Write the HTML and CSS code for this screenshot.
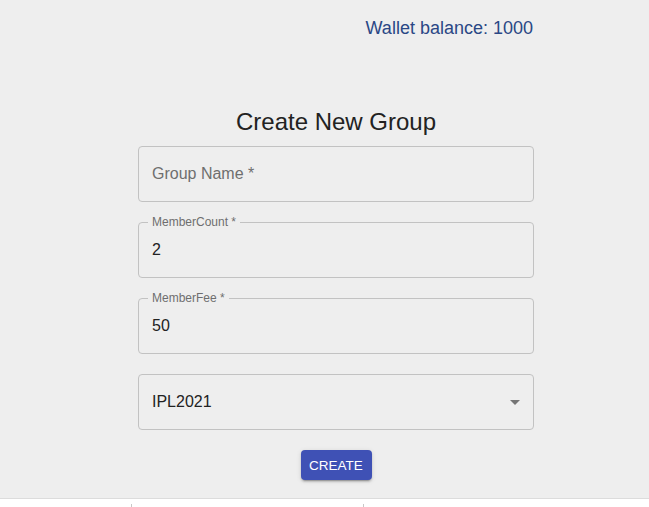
FILE: index.html
```html
<!DOCTYPE html>
<html>
<head>
<meta charset="utf-8">
<link rel="stylesheet" href="styles.css">
</head>
<body>
<div class="page">
  <div class="container">
    <div class="wallet">Wallet balance: 1000</div>
    <h1 class="title">Create New Group</h1>
    <form class="form">
      <div class="field">
        <span class="placeholder">Group Name *</span>
      </div>
      <div class="field">
        <span class="field-label">MemberCount *</span>
        <span class="value">2</span>
      </div>
      <div class="field">
        <span class="field-label">MemberFee *</span>
        <span class="value">50</span>
      </div>
      <div class="field select">
        <span class="value">IPL2021</span>
        <svg class="arrow" viewBox="0 0 24 24" width="24" height="24"><path d="M7 10l5 5 5-5z"/></svg>
      </div>
      <div class="actions">
        <button type="button" class="btn">CREATE</button>
      </div>
    </form>
  </div>
</div>
<div class="footer">
  <span class="tick tick-a"></span>
  <span class="tick tick-b"></span>
</div>
</body>
</html>
```
FILE: styles.css
```css
html, body {
  margin: 0;
  padding: 0;
  background: #ffffff;
  font-family: "Liberation Sans", Arial, sans-serif;
}
.page {
  background: #eeeeee;
  height: 499px;
  box-sizing: border-box;
  border-bottom: 1px solid #dcdcdc;
}
.container {
  width: 396px;
  margin-left: 138px;
  padding-top: 18px;
}
.wallet {
  text-align: right;
  font-size: 18px;
  line-height: 20px;
  color: #2a4785;
  margin-right: 1px;
}
.title {
  margin: 70px 0 10px;
  text-align: center;
  font-size: 24px;
  line-height: 28px;
  font-weight: normal;
  color: #222222;
}
.form {
  display: flex;
  flex-direction: column;
  gap: 20px;
}
.field {
  position: relative;
  height: 56px;
  box-sizing: border-box;
  border: 1px solid #c2c2c2;
  border-radius: 4px;
  display: flex;
  align-items: center;
  padding: 0 13px;
  font-size: 16px;
}
.placeholder {
  color: #6e6e6e;
}
.value {
  color: #222222;
}
.field-label {
  position: absolute;
  top: -8px;
  left: 9px;
  padding: 0 4px;
  background: #eeeeee;
  font-size: 12px;
  line-height: 14px;
  color: #6e6e6e;
}
.select {
  justify-content: space-between;
  padding-right: 6px;
}
.arrow {
  fill: #757575;
}
.actions {
  display: flex;
  justify-content: center;
}
.btn {
  height: 30px;
  width: 71px;
  padding: 0;
  border: none;
  border-radius: 4px;
  background: #3f51b5;
  color: #ffffff;
  font-family: "Liberation Sans", Arial, sans-serif;
  font-size: 13.5px;
  box-shadow: 0 3px 1px -2px rgba(0,0,0,0.2), 0 2px 2px 0 rgba(0,0,0,0.14), 0 1px 5px 0 rgba(0,0,0,0.12);
}
.footer {
  display: flex;
  height: 8px;
  padding-top: 5px;
  box-sizing: border-box;
}
.tick {
  width: 1px;
  height: 3px;
  background: #c8c8c8;
}
.tick-a {
  margin-left: 131px;
}
.tick-b {
  margin-left: 231px;
}
```
